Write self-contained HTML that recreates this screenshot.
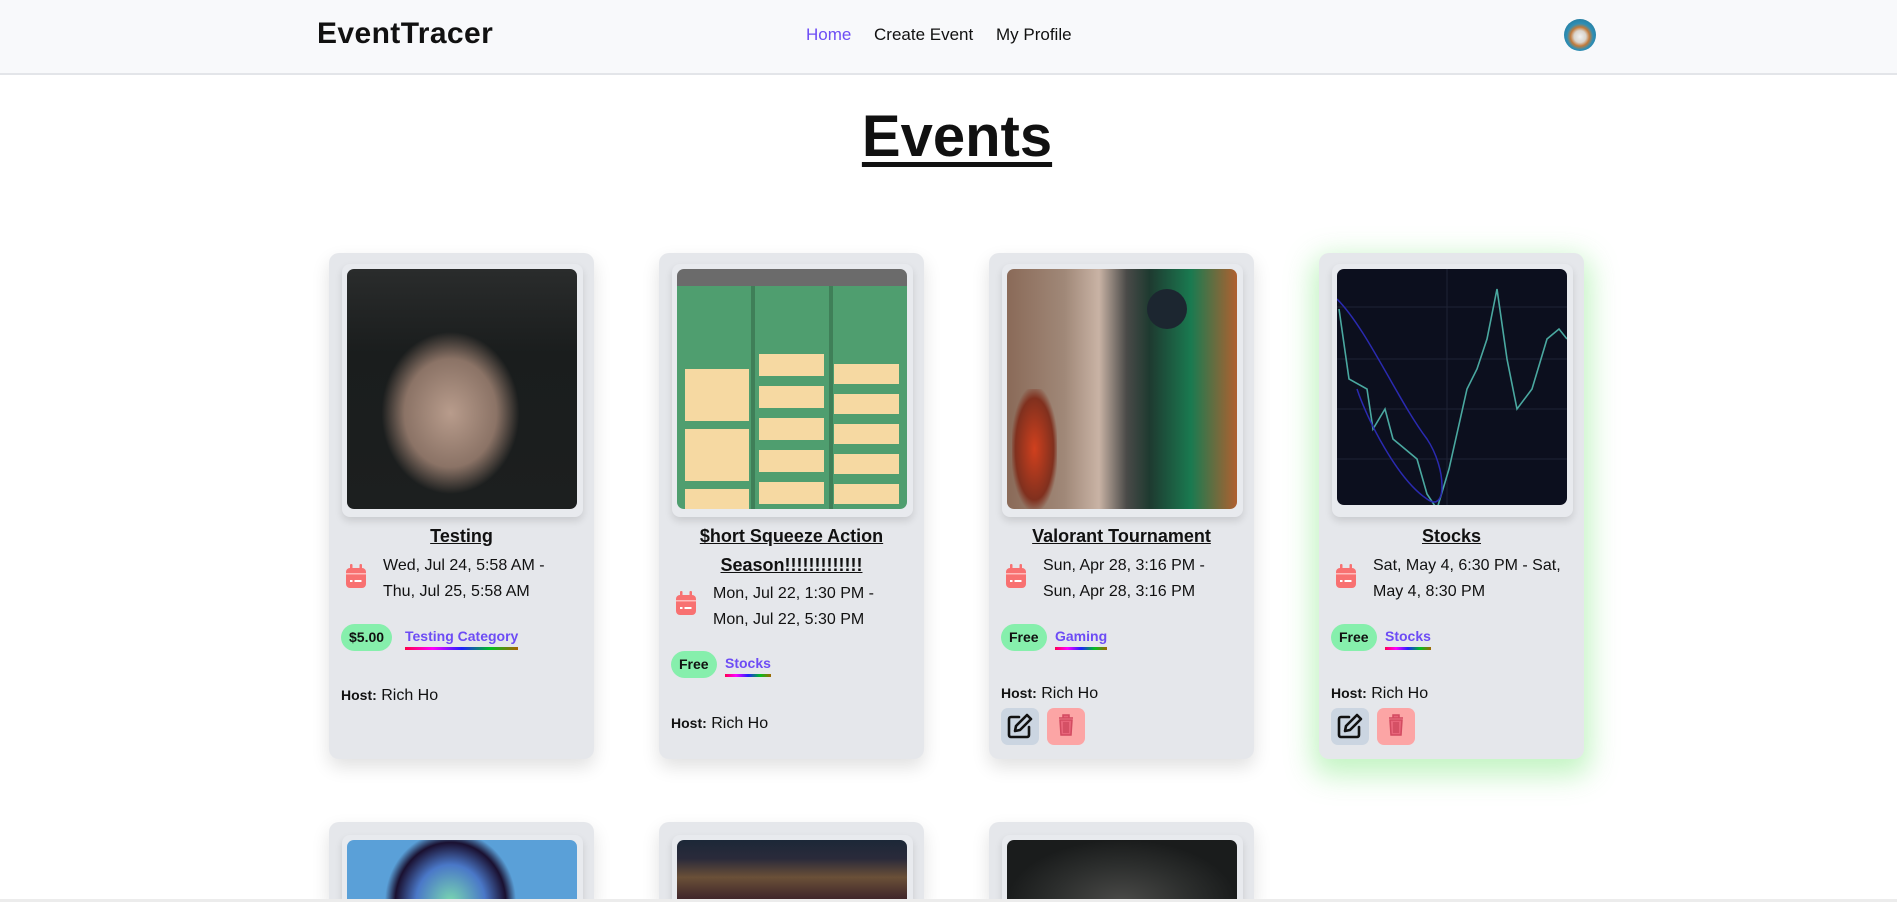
<!DOCTYPE html>
<html style="width:1897px;height:902px;overflow:hidden"><head><meta charset="utf-8"><style>
*{box-sizing:border-box;margin:0;padding:0}
body{width:1897px;height:902px;overflow:hidden;background:#fff;font-family:"Liberation Sans",sans-serif;color:#111;position:relative}
.nav{position:absolute;left:0;top:0;width:1897px;height:75px;background:#f8f9fb;border-bottom:2px solid #e3e5e9}
.logo{position:absolute;left:317px;top:17px;font-size:30px;font-weight:700;letter-spacing:0.4px}
.links{position:absolute;top:25px;font-size:17px}
.av{position:absolute;left:1564px;top:19px;width:32px;height:32px;border-radius:50%;background:radial-gradient(circle at 50% 55%,#f0f0f0 0,#d9d4cc 25%,#c27a3a 40%,#2f8fb5 55%,#1e6c8c 100%)}
h1{position:absolute;left:0;width:1914px;text-align:center;top:103px;font-size:58px;font-weight:700;text-decoration:underline;text-decoration-thickness:5px;text-underline-offset:6px}
.card{position:absolute;width:265px;height:506px;background:#e5e7eb;border-radius:10px;box-shadow:0 8px 18px rgba(0,0,0,0.12)}
.card.g{box-shadow:0 10px 28px 6px rgba(120,230,120,0.45)}
.frame{position:absolute;left:13px;top:11px;width:241px;height:253px;background:#e8eaee;border-radius:8px;box-shadow:0 4px 8px rgba(0,0,0,0.12)}
.img{position:absolute;left:5px;top:5px;width:230px;height:240px;border-radius:7px;overflow:hidden}
.t{position:absolute;left:0;width:265px;text-align:center;top:269px;font-size:18px;font-weight:700;text-decoration:underline;line-height:29px}
.d{position:absolute;left:54px;font-size:16px;line-height:26px;width:205px}
.cal{position:absolute;left:16px;width:22px;height:25px}
.b{position:absolute;left:12px;height:27px;padding:0 8px;line-height:27px;border-radius:14px;background:#86efac;font-size:14px;font-weight:700}
.c{position:absolute;font-size:14px;font-weight:700;color:#6d4cf5;padding-bottom:3px;border-bottom:3px solid;border-image:linear-gradient(90deg,#ff0040,#ff00ff,#2020ff,#00c020,#b06000) 1}
.h{position:absolute;left:12px;font-size:16px}
.h b{font-size:14px}
.btn{position:absolute;top:455px;width:38px;height:37px;border-radius:7px}
</style></head><body>
<div class="nav">
<div class="logo">EventTracer</div>
<div class="links" style="left:806px;color:#6d4cf5">Home</div>
<div class="links" style="left:874px">Create Event</div>
<div class="links" style="left:996px">My Profile</div>
<div class="av"></div>
</div>
<h1>Events</h1>

<svg width="0" height="0" style="position:absolute"><defs>
<symbol id="cal" viewBox="0 0 22 25"><rect x="1" y="4" width="20" height="20" rx="4" fill="#f87171"/><rect x="5" y="0" width="2.5" height="7" rx="1" fill="#f87171"/><rect x="14.5" y="0" width="2.5" height="7" rx="1" fill="#f87171"/><rect x="1" y="9" width="20" height="1.5" fill="#fbb"/><rect x="5" y="16" width="2.5" height="2" fill="#fff"/><rect x="9.5" y="16" width="7" height="2" fill="#fff"/></symbol>
</defs></svg>

<div class="card" style="left:329px;top:253px">
<div class="frame"><div class="img" style="background:radial-gradient(ellipse 40% 45% at 45% 60%,#b89c8c 0,#8b7366 50%,transparent 75%),linear-gradient(180deg,#2a2c2c 0,#1a1d1d 35%,#1c1f1f 100%)"></div></div>
<div class="t">Testing</div>
<svg class="cal" style="top:311px"><use href="#cal"/></svg>
<div class="d" style="top:300px">Wed, Jul 24, 5:58 AM -<br>Thu, Jul 25, 5:58 AM</div>
<div class="b" style="top:371px">$5.00</div>
<div class="c" style="left:76px;top:375px">Testing Category</div>
<div class="h" style="top:434px"><b>Host:</b> Rich Ho</div>
</div>

<div class="card" style="left:659px;top:253px">
<div class="frame"><div class="img" style="background:linear-gradient(180deg,#6b6b6b 0,#6b6b6b 7%,transparent 7%),repeating-linear-gradient(90deg,#4f9e6f 0,#4f9e6f 74px,#3f7f58 74px,#3f7f58 78px),#4f9e6f">
<div style="position:absolute;left:82px;top:85px;width:65px;height:150px;background:repeating-linear-gradient(180deg,#f6d9a2 0,#f6d9a2 22px,transparent 22px,transparent 32px)"></div>
<div style="position:absolute;left:157px;top:95px;width:65px;height:140px;background:repeating-linear-gradient(180deg,#f6d9a2 0,#f6d9a2 20px,transparent 20px,transparent 30px)"></div>
<div style="position:absolute;left:8px;top:100px;width:64px;height:140px;background:repeating-linear-gradient(180deg,#f6d9a2 0,#f6d9a2 52px,transparent 52px,transparent 60px)"></div>
</div></div>
<div class="t">$hort Squeeze Action<br>Season!!!!!!!!!!!!!</div>
<svg class="cal" style="top:338px"><use href="#cal"/></svg>
<div class="d" style="top:328px">Mon, Jul 22, 1:30 PM -<br>Mon, Jul 22, 5:30 PM</div>
<div class="b" style="top:398px">Free</div>
<div class="c" style="left:66px;top:402px">Stocks</div>
<div class="h" style="top:462px"><b>Host:</b> Rich Ho</div>
</div>

<div class="card" style="left:989px;top:253px">
<div class="frame"><div class="img" style="background:linear-gradient(90deg,#8a6a58 0,#a08878 25%,#c9b3a5 40%,#4a4a48 52%,#1e3a30 62%,#1a7a50 80%,#b06030 100%)">
<div style="position:absolute;left:5px;top:120px;width:45px;height:120px;background:radial-gradient(ellipse,#d0401e 0,#80301e 60%,transparent 75%)"></div>
<div style="position:absolute;left:140px;top:20px;width:40px;height:40px;border-radius:50%;background:#1c2630"></div>
</div></div>
<div class="t">Valorant Tournament</div>
<svg class="cal" style="top:311px"><use href="#cal"/></svg>
<div class="d" style="top:300px">Sun, Apr 28, 3:16 PM -<br>Sun, Apr 28, 3:16 PM</div>
<div class="b" style="top:371px">Free</div>
<div class="c" style="left:66px;top:375px">Gaming</div>
<div class="h" style="top:432px"><b>Host:</b> Rich Ho</div>
<div class="btn" style="left:12px;background:#cbd5e1"><svg width="38" height="37" viewBox="0 0 38 37"><path d="M18 9H10a2 2 0 0 0-2 2v16a2 2 0 0 0 2 2h16a2 2 0 0 0 2-2v-8" fill="none" stroke="#111" stroke-width="2.6" stroke-linecap="round"/><path d="M26 7l4 4-11 11-5 1 1-5z" fill="none" stroke="#111" stroke-width="2.6" stroke-linejoin="round"/></svg></div>
<div class="btn" style="left:58px;background:#fca5a5"><svg width="38" height="37" viewBox="0 0 38 37"><path d="M12 10h14M16 10V7h6v3M13 12h12l-1 15H14z" fill="#e8657a" stroke="#d24a60" stroke-width="1.5"/><path d="M17 14v11M19 14v11M21 14v11" stroke="#c23a50" stroke-width="1"/></svg></div>
</div>

<div class="card g" style="left:1319px;top:253px">
<div class="frame"><div class="img" style="background:#0c0f1e;height:236px"><svg width="230" height="236" viewBox="0 0 230 236"><path d="M0 90H230M0 38H230M0 140H230M0 190H230M110 0V236" stroke="#1e2335" stroke-width="1"/><path d="M2 40L12 110 30 120 36 160 48 140 56 170 80 190 90 225 100 240 112 200 130 120 140 100 150 70 160 20 170 90 180 140 195 120 210 70 222 60 230 70" fill="none" stroke="#4aa8a0" stroke-width="1.6"/><path d="M0 30C30 60 60 130 90 170 110 200 110 245 90 230 60 210 30 150 20 120" fill="none" stroke="#2a2ab0" stroke-width="1.5"/></svg></div></div>
<div class="t">Stocks</div>
<svg class="cal" style="top:311px"><use href="#cal"/></svg>
<div class="d" style="top:300px">Sat, May 4, 6:30 PM - Sat,<br>May 4, 8:30 PM</div>
<div class="b" style="top:371px">Free</div>
<div class="c" style="left:66px;top:375px">Stocks</div>
<div class="h" style="top:432px"><b>Host:</b> Rich Ho</div>
<div class="btn" style="left:12px;background:#cbd5e1"><svg width="38" height="37" viewBox="0 0 38 37"><path d="M18 9H10a2 2 0 0 0-2 2v16a2 2 0 0 0 2 2h16a2 2 0 0 0 2-2v-8" fill="none" stroke="#111" stroke-width="2.6" stroke-linecap="round"/><path d="M26 7l4 4-11 11-5 1 1-5z" fill="none" stroke="#111" stroke-width="2.6" stroke-linejoin="round"/></svg></div>
<div class="btn" style="left:58px;background:#fca5a5"><svg width="38" height="37" viewBox="0 0 38 37"><path d="M12 10h14M16 10V7h6v3M13 12h12l-1 15H14z" fill="#e8657a" stroke="#d24a60" stroke-width="1.5"/><path d="M17 14v11M19 14v11M21 14v11" stroke="#c23a50" stroke-width="1"/></svg></div>
</div>

<div class="card" style="left:329px;top:822px;height:80px;border-radius:10px 10px 0 0"><div class="frame" style="top:13px;height:67px;border-radius:8px 8px 0 0"><div class="img" style="height:62px;border-radius:7px 7px 0 0;background:radial-gradient(ellipse 30% 120% at 45% 100%,#7ad8b0 0,#4a78c8 50%,#1a1030 80%,#5aa0d8 95%)"></div></div></div>
<div class="card" style="left:659px;top:822px;height:80px;border-radius:10px 10px 0 0"><div class="frame" style="top:13px;height:67px;border-radius:8px 8px 0 0"><div class="img" style="height:62px;border-radius:7px 7px 0 0;background:linear-gradient(180deg,#1c2838 0,#2a2a3a 30%,#6a5038 60%,#3a2028 100%)"></div></div></div>
<div class="card" style="left:989px;top:822px;height:80px;border-radius:10px 10px 0 0"><div class="frame" style="top:13px;height:67px;border-radius:8px 8px 0 0"><div class="img" style="height:62px;border-radius:7px 7px 0 0;background:radial-gradient(ellipse 50% 100% at 50% 100%,#4a4a48 0,#2c2e2d 60%,#1a1c1c 100%)"></div></div></div>
<div style="position:absolute;left:0;top:899px;width:1897px;height:3px;background:#ececec"></div>
</body></html>
